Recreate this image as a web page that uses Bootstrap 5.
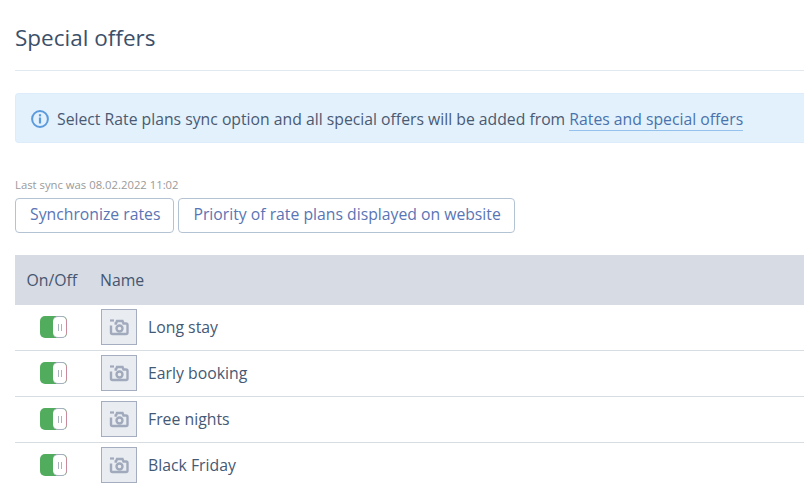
<!DOCTYPE html>
<html lang="en">
<head>
<meta charset="utf-8">
<link href="https://cdn.jsdelivr.net/npm/bootstrap@5.3.0/dist/css/bootstrap.min.css" rel="stylesheet">
<style>
html,body{height:488px;overflow:hidden}
body{font-family:"Open Sans","Noto Sans",sans-serif;color:#3f5270;background:#fff}
.pg{width:804px;padding:0 0 0 15px}
.ttl{font-size:22.5px;line-height:33px;font-weight:400;color:#3c5069;margin:0;padding:21px 0 16px;border-bottom:1px solid #e1e8f0}
.inf{height:50px;margin-top:22px;background:#e3f1fd;border:1px solid #dcecfb;border-right:0;border-radius:4px 0 0 4px;padding:1px 0 0 15px;font-size:15.75px;color:#4a5a72}
.inf span{padding-top:2px}
.inf a{color:#4a73ac;text-decoration:none;border-bottom:1px solid #95c2ec}
.syn{font-size:11.3px;line-height:15px;color:#9a9a9a;margin-top:34px}
.bts{margin-top:6px;gap:4px}
.bt{height:35px;border:1px solid #b4c3d4;border-radius:4px;padding:0 13.500px 0 14px;font-size:15.75px;color:#5a75b5;background:#fff;line-height:31px}
.bt:first-child{padding:0 13px 0 14px}
.tb{margin-top:22px;width:100%;--bs-table-bg:transparent;margin-bottom:0;color:#445975}
.tb th{background:#d7dbe3;height:50px;font-weight:400;font-size:15.8px;padding:1px 0 0;vertical-align:middle;border:0;color:#445670}
.tb td{height:46px;padding:0;vertical-align:middle;font-size:15.8px;border-bottom:1px solid #d8dde2;color:#445975}
.tb tbody tr:first-child td{height:45px}
.tb .c1{width:74px;padding-left:11.500px}
.c2{width:11px}
.sw{display:flex;width:27px;height:22px;margin-left:13.500px;border-radius:5px;overflow:hidden;background:#51ad5d}
.sw span{margin-left:13px;width:14px;background:#fff;border:1px solid #a6aec0;border-right-color:#c98a9c;border-left:0;border-radius:5px;display:flex;align-items:center;justify-content:center;gap:2px}
.sw i{width:1px;height:7px;background:#aab3c0}
.ph{width:36px;height:36px;margin-left:1px;background:#e9ecf1;border:1px solid #a5aec0;display:flex;align-items:center;justify-content:center}
.nm{margin-left:3px;padding-top:2px}
</style>
</head>
<body>
<div class="pg">
<h1 class="ttl">Special offers</h1>
<div class="inf d-flex align-items-center">
<svg class="me-2" width="18" height="18" viewBox="0 0 18 18" fill="none"><circle cx="9" cy="9" r="7.9" stroke="#5b9bdc" stroke-width="2"/><rect x="7.900" y="7.500" width="2.200" height="6" fill="#5b9bdc"/><rect x="7.900" y="4.200" width="2.200" height="2.200" fill="#5b9bdc"/></svg>
<span>Select Rate plans sync option and all special offers will be added from <a href="#">Rates and special offers</a></span>
</div>
<div class="syn">Last sync was 08.02.2022 11:02</div>
<div class="bts d-flex">
<div class="bt">Synchronize rates</div>
<div class="bt">Priority of rate plans displayed on website</div>
</div>
<table class="table tb">
<thead><tr><th class="c1">On/Off</th><th class="c2"></th><th>Name</th></tr></thead>
<tbody>
<tr><td class="c1"><div class="sw"><span><i></i><i></i></span></div></td><td></td><td><div class="d-flex align-items-center gap-2"><div class="ph"><svg width="20" height="18" viewBox="0 0 20 18" fill="none"><use href="#cam"/></svg></div><span class="nm">Long stay</span></div></td></tr>
<tr><td class="c1"><div class="sw"><span><i></i><i></i></span></div></td><td></td><td><div class="d-flex align-items-center gap-2"><div class="ph"><svg width="20" height="18" viewBox="0 0 20 18" fill="none"><use href="#cam"/></svg></div><span class="nm">Early booking</span></div></td></tr>
<tr><td class="c1"><div class="sw"><span><i></i><i></i></span></div></td><td></td><td><div class="d-flex align-items-center gap-2"><div class="ph"><svg width="20" height="18" viewBox="0 0 20 18" fill="none"><use href="#cam"/></svg></div><span class="nm">Free nights</span></div></td></tr>
<tr><td class="c1"><div class="sw"><span><i></i><i></i></span></div></td><td></td><td><div class="d-flex align-items-center gap-2"><div class="ph"><svg width="20" height="18" viewBox="0 0 20 18" fill="none"><use href="#cam"/></svg></div><span class="nm">Black Friday</span></div></td></tr>
</tbody>
</table>
</div>
<svg width="0" height="0" class="d-block"><defs><g id="cam"><path d="M2 7.500V14.500A1.500 1.500 0 0 0 3.500 16H17A1.500 1.500 0 0 0 18.500 14.500V7A1.500 1.500 0 0 0 17 5.500H14.500L13.500 3H8L7 5.500H5.500" stroke="#a1aabd" stroke-width="2.400"/><circle cx="10.500" cy="10.500" r="3" stroke="#a1aabd" stroke-width="2.400"/><path d="M1 2.500H5" stroke="#a1aabd" stroke-width="2.200"/></g></defs></svg>
<script src="https://cdn.jsdelivr.net/npm/bootstrap@5.3.0/dist/js/bootstrap.bundle.min.js"></script>
</body>
</html>
